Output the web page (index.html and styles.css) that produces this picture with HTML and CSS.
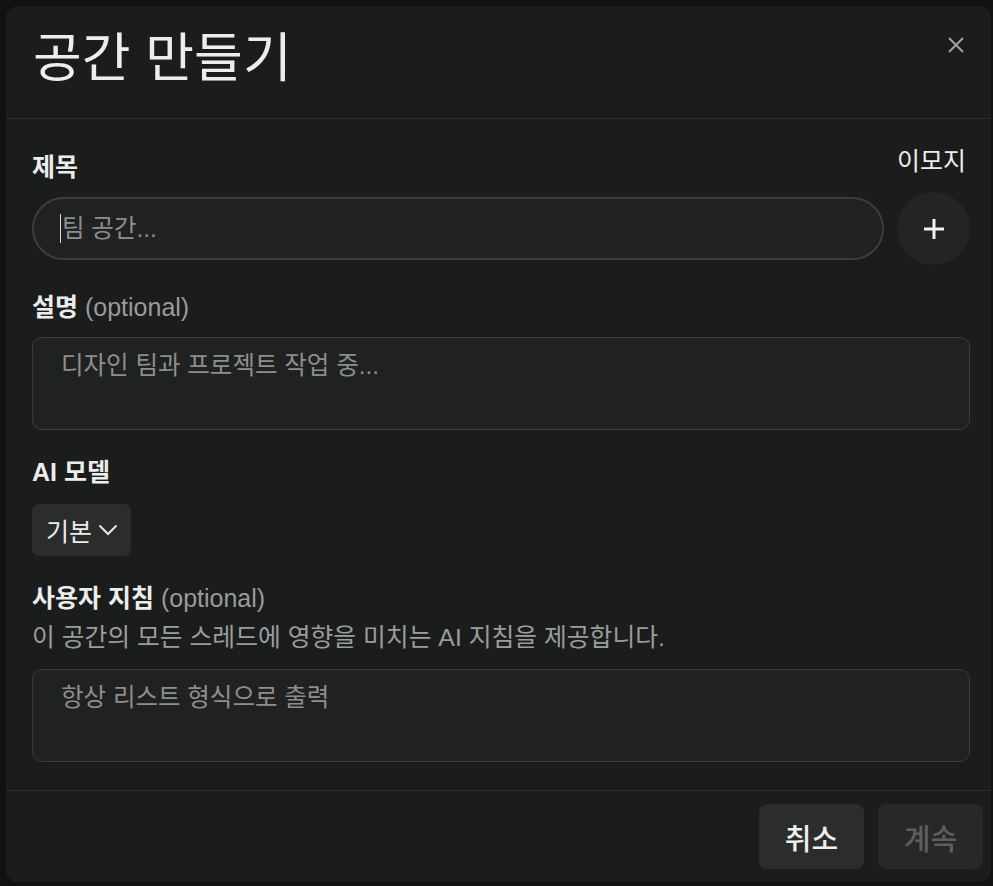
FILE: index.html
```html
<!DOCTYPE html>
<html lang="ko">
<head>
<meta charset="utf-8">
<title>공간 만들기</title>
<link rel="stylesheet" href="styles.css">
</head>
<body>
<div class="dialog">
  <header class="dialog-header">
    <h1 class="title">공간 만들기</h1>
    <button class="close" aria-label="닫기">
      <svg width="16" height="16" viewBox="0 0 16 16"><path d="M1 1 L15 15 M15 1 L1 15" stroke="#a2a3a3" stroke-width="2" fill="none"/></svg>
    </button>
  </header>
  <div class="dialog-body">
    <div class="title-row">
      <div class="col-main">
        <div class="label">제목</div>
        <div class="input"><span class="caret"></span><span class="placeholder">팀 공간...</span></div>
      </div>
      <div class="col-emoji">
        <div class="label light">이모지</div>
        <button class="emoji-btn" aria-label="이모지 추가">
          <svg width="24" height="24" viewBox="0 0 24 24"><path d="M12 2 V22 M2 12 H22" stroke="#f2f2f2" stroke-width="3" fill="none"/></svg>
        </button>
      </div>
    </div>

    <div class="field desc-field">
      <div class="label">설명 <span class="optional">(optional)</span></div>
      <div class="textarea"><span class="placeholder">디자인 팀과 프로젝트 작업 중...</span></div>
    </div>

    <div class="field">
      <div class="label">AI 모델</div>
      <div class="select-row">
        <button class="select">기본
          <svg width="20" height="12" viewBox="0 0 20 12"><path d="M1.5 1.5 L10 10 L18.5 1.5" stroke="#e6e6e6" stroke-width="2" fill="none"/></svg>
        </button>
      </div>
    </div>

    <div class="field">
      <div class="label">사용자 지침 <span class="optional">(optional)</span></div>
      <div class="help">이 공간의 모든 스레드에 영향을 미치는 AI 지침을 제공합니다.</div>
      <div class="textarea"><span class="placeholder">항상 리스트 형식으로 출력</span></div>
    </div>
  </div>
  <footer class="dialog-footer">
    <button class="btn">취소</button>
    <button class="btn disabled">계속</button>
  </footer>
</div>
</body>
</html>
```
FILE: styles.css
```css
* { box-sizing: border-box; }
html, body { margin: 0; padding: 0; }
body {
  background: #111212;
  width: 993px;
  height: 886px;
  padding: 6px 2px 4px 6px;
  font-family: "Liberation Sans", "Noto Sans CJK KR", sans-serif;
  color: #ececec;
}
button { font-family: inherit; border: none; cursor: pointer; }
.dialog {
  background: #1b1c1c;
  border-radius: 12px;
  height: 876px;
  display: flex;
  flex-direction: column;
}
.dialog-header {
  height: 113px;
  border-bottom: 1px solid #2d2e2e;
  display: flex;
  align-items: flex-start;
  justify-content: space-between;
  padding: 16px 21px 0 27px;
}
.title {
  margin: 0;
  font-family: "Noto Sans CJK KR", sans-serif;
  font-weight: 400;
  font-size: 53px;
  line-height: 64px;
  color: #ededed;
}
.close {
  background: transparent;
  padding: 0;
  width: 28px;
  height: 28px;
  display: flex;
  align-items: center;
  justify-content: center;
  margin-top: 9px;
}
.dialog-body {
  flex: 1;
  padding: 34px 21px 0 26px;
  display: flex;
  flex-direction: column;
}
.label {
  font-size: 25px;
  line-height: 28px;
  font-weight: 600;
  color: #ececec;
}
.label.light { font-weight: 400; }
.optional { font-weight: 400; color: #9a9b9b; }
.title-row {
  display: flex;
  gap: 13px;
}
.col-main { flex: 1; display: flex; flex-direction: column; gap: 16px; }
.col-emoji { width: 73px; display: flex; flex-direction: column; align-items: center; gap: 17px; }
.col-emoji .label { margin-top: -6px; margin-right: 4px; white-space: nowrap; }
.input {
  height: 63px;
  border: 2px solid #3c3d3d;
  background: #202121;
  border-radius: 32px;
  display: flex;
  align-items: center;
  padding-left: 26px;
}
.caret {
  width: 1px;
  height: 29px;
  background: #d8d8d8;
  margin-right: 1px;
}
.placeholder { font-size: 24.5px; line-height: 28px; color: #8d8e8e; }
.emoji-btn {
  width: 73px;
  height: 73px;
  border-radius: 50%;
  background: #232424;
  display: flex;
  align-items: center;
  justify-content: center;
  margin-bottom: -5px;
}
.field { display: flex; flex-direction: column; gap: 16px; margin-top: 28px; }
.desc-field { margin-top: 33px; }
.textarea {
  height: 93px;
  border: 1px solid #3a3b3b;
  background: #202121;
  border-radius: 10px;
  padding: 14px 28px;
}
.select-row { display: flex; margin-top: 2px; }
.select {
  height: 52px;
  background: #2b2c2c;
  border-radius: 7px;
  color: #ececec;
  font-size: 25px;
  padding: 0 13px 0 14px;
  display: flex;
  align-items: center;
  gap: 6px;
}
.help {
  font-size: 24.8px;
  line-height: 28px;
  color: #9b9c9c;
  margin-top: -4px;
  margin-bottom: 1px;
}
.dialog-footer {
  height: 92px;
  border-top: 1px solid #2d2e2e;
  display: flex;
  justify-content: flex-end;
  align-items: flex-start;
  gap: 14px;
  padding: 13px 8px 0 0;
}
.btn {
  width: 105px;
  height: 65px;
  border-radius: 8px;
  background: #2b2c2c;
  color: #eeeeee;
  font-size: 29px;
  font-weight: 500;
}
.btn.disabled { background: #272828; color: #5d5e5e; }
```
